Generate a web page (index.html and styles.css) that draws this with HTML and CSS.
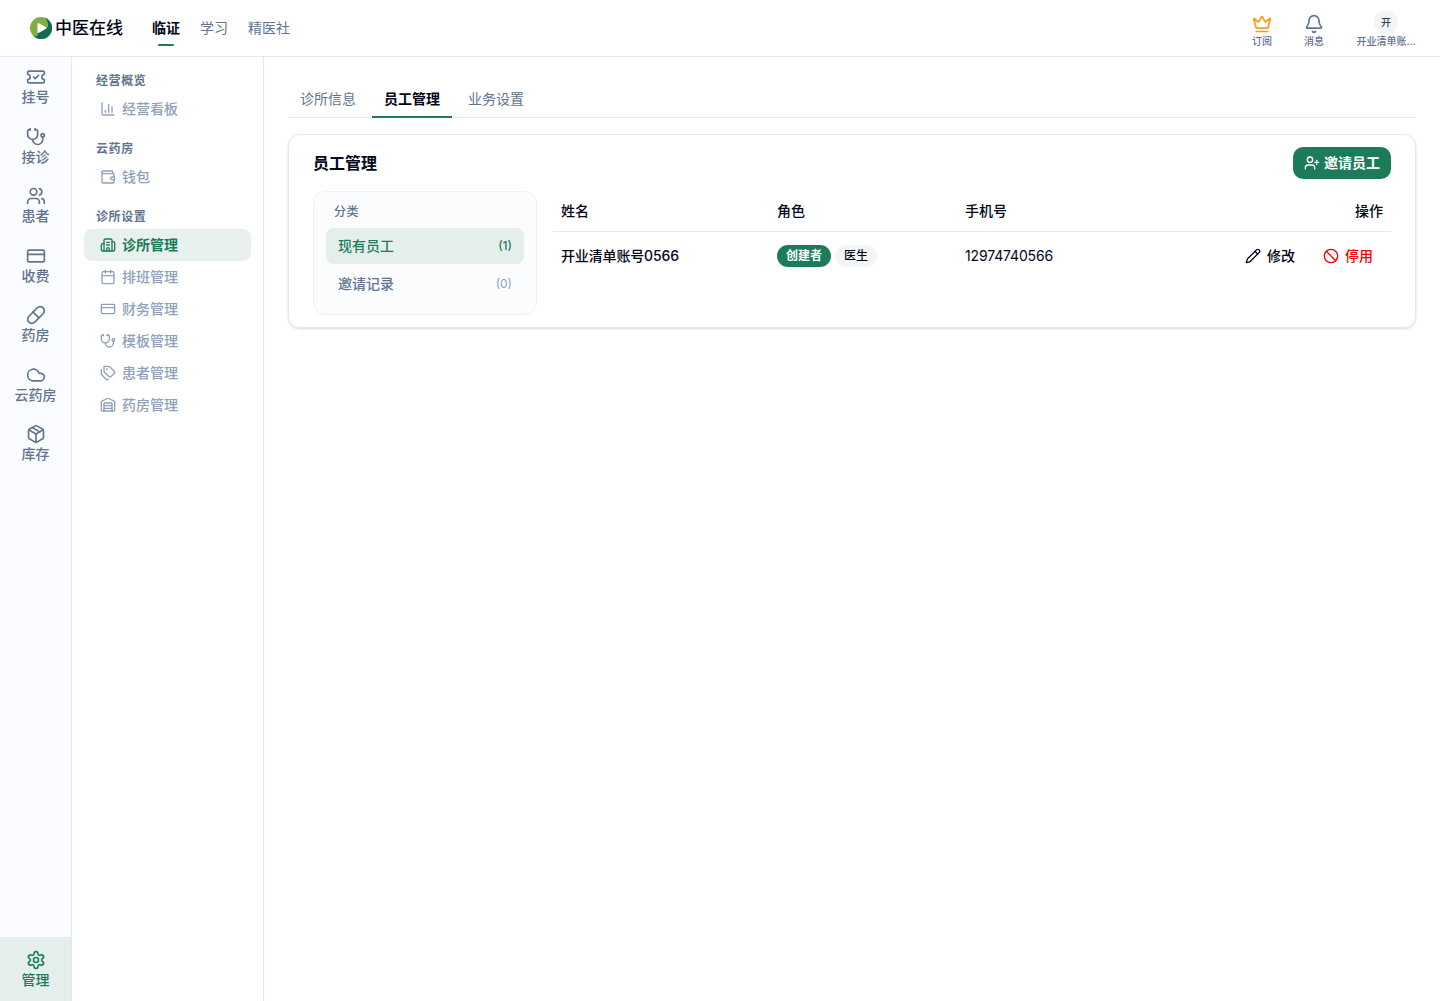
FILE: index.html
```html
<!DOCTYPE html>
<html lang="zh-CN">
<head>
    <meta charset="UTF-8">
    <meta name="viewport" content="width=device-width, initial-scale=1.0">
    <title>中医在线</title>
    <link rel="stylesheet" href="styles.css">
</head>
<body>
    <!-- shared icons -->
    <svg class="sprite">
        <symbol id="ticket" viewBox="0 0 24 24"><path d="M2 9a3 3 0 1 1 0 6v2a2 2 0 0 0 2 2h16a2 2 0 0 0 2-2v-2a3 3 0 1 1 0-6V7a2 2 0 0 0-2-2H4a2 2 0 0 0-2 2Z"/><path d="m9 12 2 2 4-4"/></symbol>
        <symbol id="stethoscope" viewBox="0 0 24 24"><path d="M11 2v2"/><path d="M5 2v2"/><path d="M5 3H4a2 2 0 0 0-2 2v4a6 6 0 0 0 12 0V5a2 2 0 0 0-2-2h-1"/><path d="M8 15a6 6 0 0 0 12 0v-3"/><circle cx="20" cy="10" r="2"/></symbol>
        <symbol id="users" viewBox="0 0 24 24"><path d="M16 21v-2a4 4 0 0 0-4-4H6a4 4 0 0 0-4 4v2"/><circle cx="9" cy="7" r="4"/><path d="M22 21v-2a4 4 0 0 0-3-3.87"/><path d="M16 3.13a4 4 0 0 1 0 7.75"/></symbol>
        <symbol id="card" viewBox="0 0 24 24"><rect width="20" height="14" x="2" y="5" rx="2"/><path d="M2 10h20"/></symbol>
        <symbol id="pill" viewBox="0 0 24 24"><path d="m10.5 20.5 10-10a4.95 4.95 0 1 0-7-7l-10 10a4.95 4.95 0 1 0 7 7Z"/><path d="m8.5 8.5 7 7"/></symbol>
        <symbol id="cloud" viewBox="0 0 24 24"><path d="M17.5 19H9a7 7 0 1 1 6.71-9h1.79a4.5 4.5 0 1 1 0 9Z"/></symbol>
        <symbol id="package" viewBox="0 0 24 24"><path d="M11 21.73a2 2 0 0 0 2 0l7-4A2 2 0 0 0 21 16V8a2 2 0 0 0-1-1.73l-7-4a2 2 0 0 0-2 0l-7 4A2 2 0 0 0 3 8v8a2 2 0 0 0 1 1.73z"/><path d="M12 22V12"/><path d="m3.3 7 8.7 5 8.7-5"/><path d="m7.5 4.27 9 5.15"/></symbol>
        <symbol id="settings" viewBox="0 0 24 24"><path d="M12.22 2h-.44a2 2 0 0 0-2 2v.18a2 2 0 0 1-1 1.73l-.43.25a2 2 0 0 1-2 0l-.15-.08a2 2 0 0 0-2.73.73l-.22.38a2 2 0 0 0 .73 2.73l.15.1a2 2 0 0 1 1 1.72v.51a2 2 0 0 1-1 1.74l-.15.09a2 2 0 0 0-.73 2.73l.22.38a2 2 0 0 0 2.73.73l.15-.08a2 2 0 0 1 2 0l.43.25a2 2 0 0 1 1 1.73V20a2 2 0 0 0 2 2h.44a2 2 0 0 0 2-2v-.18a2 2 0 0 1 1-1.73l.43-.25a2 2 0 0 1 2 0l.15.08a2 2 0 0 0 2.73-.73l.22-.39a2 2 0 0 0-.73-2.73l-.15-.08a2 2 0 0 1-1-1.74v-.5a2 2 0 0 1 1-1.74l.15-.09a2 2 0 0 0 .73-2.73l-.22-.38a2 2 0 0 0-2.73-.73l-.15.08a2 2 0 0 1-2 0l-.43-.25a2 2 0 0 1-1-1.73V4a2 2 0 0 0-2-2z"/><circle cx="12" cy="12" r="3"/></symbol>
        <symbol id="chart" viewBox="0 0 24 24"><path d="M3 3v16a2 2 0 0 0 2 2h16"/><path d="M18 17V9"/><path d="M13 17V5"/><path d="M8 17v-3"/></symbol>
        <symbol id="wallet" viewBox="0 0 24 24"><path d="M19 7V4a1 1 0 0 0-1-1H5a2 2 0 0 0 0 4h15a1 1 0 0 1 1 1v4h-3a2 2 0 0 0 0 4h3a1 1 0 0 0 1-1v-2a1 1 0 0 0-1-1"/><path d="M3 5v14a2 2 0 0 0 2 2h15a1 1 0 0 0 1-1v-4"/></symbol>
        <symbol id="hospital" viewBox="0 0 24 24"><path d="M10 12h4"/><path d="M10 8h4"/><path d="M14 21v-3a2 2 0 0 0-4 0v3"/><path d="M6 10H4a2 2 0 0 0-2 2v7a2 2 0 0 0 2 2h16a2 2 0 0 0 2-2V9a2 2 0 0 0-2-2h-2"/><path d="M6 21V5a2 2 0 0 1 2-2h8a2 2 0 0 1 2 2v16"/></symbol>
        <symbol id="calendar" viewBox="0 0 24 24"><path d="M8 2v4"/><path d="M16 2v4"/><rect width="18" height="18" x="3" y="4" rx="2"/><path d="M3 10h18"/></symbol>
        <symbol id="tags" viewBox="0 0 24 24"><path d="M13.172 2a2 2 0 0 1 1.414.586l6.71 6.71a2.4 2.4 0 0 1 0 3.408l-4.592 4.592a2.4 2.4 0 0 1-3.408 0l-6.71-6.71A2 2 0 0 1 6 9.172V3a1 1 0 0 1 1-1z"/><path d="M2 7v6.172a2 2 0 0 0 .586 1.414l6.71 6.71a2.4 2.4 0 0 0 3.191.193"/><circle cx="10.5" cy="6.5" r=".5" fill="currentColor"/></symbol>
        <symbol id="warehouse" viewBox="0 0 24 24"><path d="M18 21V10a1 1 0 0 0-1-1H7a1 1 0 0 0-1 1v11"/><path d="M22 19a2 2 0 0 1-2 2H4a2 2 0 0 1-2-2V8a2 2 0 0 1 1.132-1.803l7.95-3.974a2 2 0 0 1 1.837 0l7.948 3.974A2 2 0 0 1 22 8z"/><path d="M6 13h12"/><path d="M6 17h12"/></symbol>
        <symbol id="crown" viewBox="0 0 24 24"><path d="M11.562 3.266a.5.5 0 0 1 .876 0L15.39 8.87a1 1 0 0 0 1.516.294L21.183 5.5a.5.5 0 0 1 .798.519l-2.834 10.246a1 1 0 0 1-.956.734H5.81a1 1 0 0 1-.957-.734L2.02 6.02a.5.5 0 0 1 .798-.519l4.276 3.664a1 1 0 0 0 1.516-.294z"/><path d="M5 21h14"/></symbol>
        <symbol id="bell" viewBox="0 0 24 24"><path d="M10.268 21a2 2 0 0 0 3.464 0"/><path d="M3.262 15.326A1 1 0 0 0 4 17h16a1 1 0 0 0 .74-1.673C19.41 13.956 18 12.499 18 8A6 6 0 0 0 6 8c0 4.499-1.411 5.956-2.738 7.326"/></symbol>
        <symbol id="user-plus" viewBox="0 0 24 24"><path d="M16 21v-2a4 4 0 0 0-4-4H6a4 4 0 0 0-4 4v2"/><circle cx="9" cy="7" r="4"/><path d="M19 8v6"/><path d="M22 11h-6"/></symbol>
        <symbol id="pencil" viewBox="0 0 24 24"><path d="M21.174 6.812a1 1 0 0 0-3.986-3.987L3.842 16.174a2 2 0 0 0-.5.83l-1.321 4.352a.5.5 0 0 0 .623.622l4.353-1.32a2 2 0 0 0 .83-.497z"/><path d="m15 5 4 4"/></symbol>
        <symbol id="ban" viewBox="0 0 24 24"><circle cx="12" cy="12" r="10"/><path d="m4.9 4.9 14.2 14.2"/></symbol>
    </svg>

    <header class="header">
        <div class="logo">
            <svg class="logo-mark" viewBox="0 0 22 22">
                <circle cx="11" cy="11" r="11" fill="#7fae42"/>
                <path d="M15 .8A11 11 0 1 1 3.500 19C6 20 8.500 18.500 8 16L18 10C18.500 6 17 3 15 .8Z" fill="#0f6b57"/>
                <path d="M8.500 7v8L15.500 11Z" fill="#fff" stroke="#fff" stroke-width="2" stroke-linejoin="round"/>
            </svg>
            <span class="logo-text">中医在线</span>
        </div>
        <nav class="topnav">
            <a class="topnav-link active">临证</a>
            <a class="topnav-link">学习</a>
            <a class="topnav-link">精医社</a>
        </nav>
        <div class="tools">
            <div class="tool"><svg class="icon icon-lg crown"><use href="#crown"/></svg><span>订阅</span></div>
            <div class="tool"><svg class="icon icon-lg"><use href="#bell"/></svg><span>消息</span></div>
            <div class="tool account"><div class="avatar">开</div><span>开业清单账...</span></div>
        </div>
    </header>

    <div class="layout">
        <aside class="rail">
            <a class="rail-item"><svg class="icon icon-lg"><use href="#ticket"/></svg>挂号</a>
            <a class="rail-item"><svg class="icon icon-lg"><use href="#stethoscope"/></svg>接诊</a>
            <a class="rail-item"><svg class="icon icon-lg"><use href="#users"/></svg>患者</a>
            <a class="rail-item"><svg class="icon icon-lg"><use href="#card"/></svg>收费</a>
            <a class="rail-item"><svg class="icon icon-lg"><use href="#pill"/></svg>药房</a>
            <a class="rail-item"><svg class="icon icon-lg"><use href="#cloud"/></svg>云药房</a>
            <a class="rail-item"><svg class="icon icon-lg"><use href="#package"/></svg>库存</a>
            <a class="rail-item manage"><svg class="icon icon-lg"><use href="#settings"/></svg>管理</a>
        </aside>

        <aside class="menu">
            <h3 class="menu-title">经营概览</h3>
            <a class="menu-item"><svg class="icon"><use href="#chart"/></svg>经营看板</a>
            <h3 class="menu-title">云药房</h3>
            <a class="menu-item"><svg class="icon"><use href="#wallet"/></svg>钱包</a>
            <h3 class="menu-title">诊所设置</h3>
            <a class="menu-item active"><svg class="icon"><use href="#hospital"/></svg>诊所管理</a>
            <a class="menu-item"><svg class="icon"><use href="#calendar"/></svg>排班管理</a>
            <a class="menu-item"><svg class="icon"><use href="#card"/></svg>财务管理</a>
            <a class="menu-item"><svg class="icon"><use href="#stethoscope"/></svg>模板管理</a>
            <a class="menu-item"><svg class="icon"><use href="#tags"/></svg>患者管理</a>
            <a class="menu-item"><svg class="icon"><use href="#warehouse"/></svg>药房管理</a>
        </aside>

        <main class="main">
            <div class="tabs">
                <a class="tab">诊所信息</a>
                <a class="tab active">员工管理</a>
                <a class="tab">业务设置</a>
            </div>

            <section class="card">
                <div class="card-head">
                    <h2 class="card-title">员工管理</h2>
                    <button class="invite"><svg class="icon"><use href="#user-plus"/></svg>邀请员工</button>
                </div>
                <div class="card-body">
                    <div class="category">
                        <div class="category-title">分类</div>
                        <a class="category-item active">现有员工<span class="count">(1)</span></a>
                        <a class="category-item">邀请记录<span class="count">(0)</span></a>
                    </div>
                    <table class="staff">
                        <thead>
                            <tr>
                                <th class="col-name">姓名</th>
                                <th class="col-role">角色</th>
                                <th class="col-phone">手机号</th>
                                <th class="col-action">操作</th>
                            </tr>
                        </thead>
                        <tbody>
                            <tr>
                                <td class="name">开业清单账号0566</td>
                                <td><div class="badges"><span class="badge badge-owner">创建者</span><span class="badge">医生</span></div></td>
                                <td class="phone">12974740566</td>
                                <td>
                                    <div class="actions">
                                        <button class="action"><svg class="icon"><use href="#pencil"/></svg>修改</button>
                                        <button class="action danger"><svg class="icon"><use href="#ban"/></svg>停用</button>
                                    </div>
                                </td>
                            </tr>
                        </tbody>
                    </table>
                </div>
            </section>
        </main>
    </div>
</body>
</html>
```
FILE: styles.css
```css
* {
    box-sizing: border-box;
}
body {
    margin: 0;
    height: 100vh;
    display: flex;
    flex-direction: column;
    overflow: hidden;
    background: #fff;
    color: #020618;
    font-family: Inter, "Noto Sans CJK SC", sans-serif;
    font-size: 14px;
    line-height: 20px;
}
h2, h3 {
    margin: 0;
}
button {
    border: 0;
    background: none;
    font: inherit;
    color: inherit;
}
.sprite {
    display: none;
}
.icon {
    width: 16px;
    height: 16px;
    flex-shrink: 0;
    fill: none;
    stroke: currentColor;
    stroke-width: 2;
    stroke-linecap: round;
    stroke-linejoin: round;
}
.icon-lg {
    width: 20px;
    height: 20px;
}

/* header */
.header {
    height: 57px;
    flex-shrink: 0;
    display: flex;
    align-items: center;
    padding: 0 24px 0 30px;
    border-bottom: 1px solid #e2e8f0;
}
.logo {
    display: flex;
    align-items: center;
    gap: 3px;
    width: 94px;
}
.logo-mark {
    width: 22px;
    height: 22px;
}
.logo-text {
    font-size: 17px;
    font-weight: 500;
    white-space: nowrap;
}
.topnav {
    display: flex;
    gap: 20px;
    margin-left: 28px;
    color: #62748e;
}
.topnav-link {
    height: 36px;
    padding-top: 8px;
}
.topnav-link.active {
    color: #020618;
    font-weight: 600;
}
.topnav-link.active::after {
    content: "";
    display: block;
    width: 16px;
    height: 2px;
    margin: 6px auto 0;
    border-radius: 1px;
    background: #1c7c5a;
}
.tools {
    display: flex;
    gap: 32px;
    margin-left: auto;
    color: #62748e;
    font-size: 10px;
    line-height: 12px;
}
.tool {
    display: flex;
    flex-direction: column;
    align-items: center;
    justify-content: flex-end;
    gap: 1px;
    height: 38px;
    font-weight: 500;
}
.crown {
    color: #ff9a12;
}
.avatar {
    width: 24px;
    height: 24px;
    border-radius: 50%;
    background: #f3f4f6;
    color: #314158;
    line-height: 24px;
    text-align: center;
}
.account {
    width: 60px;
    white-space: nowrap;
}

.layout {
    display: flex;
    flex: 1;
    min-height: 0;
}

/* left rail */
.rail {
    width: 72px;
    display: flex;
    flex-direction: column;
    background: #fbfcff;
    border-right: 1px solid #e2e8f0;
    color: #62748e;
}
.rail-item {
    display: flex;
    flex-direction: column;
    align-items: center;
    gap: 1px;
    padding: 10px 0 11px;
    line-height: 17.5px;
    font-weight: 500;
}
.rail-item.manage {
    margin-top: auto;
    height: 64px;
    padding-top: 13px;
    background: #e4efec;
    color: #1c7c5a;
}

/* second level menu */
.menu {
    width: 192px;
    padding: 0 12px;
    border-right: 1px solid #e2e8f0;
    color: #90a1b9;
}
.menu-title {
    padding: 16px 12px 4px;
    font-size: 12px;
    font-weight: 600;
    line-height: 16px;
    letter-spacing: 0.6px;
    color: #62748e;
}
.menu-item {
    display: flex;
    align-items: center;
    gap: 6px;
    height: 32px;
    padding: 0 16px;
    border-radius: 8px;
    font-weight: 500;
}
.menu-item.active {
    background: #e8f1ee;
    color: #1c7c5a;
    font-weight: 600;
}

/* content */
.main {
    flex: 1;
    padding: 24px;
}
.tabs {
    display: flex;
    gap: 4px;
    height: 37px;
    border-bottom: 1px solid #e2e8f0;
    color: #62748e;
}
.tab {
    height: 37px;
    padding: 8px 12px;
}
.tab.active {
    color: #020618;
    font-weight: 600;
    border-bottom: 2px solid #1c7c5a;
}
.card {
    margin-top: 16px;
    padding: 12px 24px;
    border: 1px solid #e2e8f0;
    border-radius: 12px;
    box-shadow: 0 1px 3px rgba(0, 0, 0, 0.1), 0 1px 2px rgba(0, 0, 0, 0.06);
}
.card-head {
    display: flex;
    align-items: center;
    justify-content: space-between;
    margin-bottom: 12px;
}
.card-title {
    font-size: 16px;
    font-weight: 600;
}
.invite {
    display: flex;
    align-items: center;
    gap: 4px;
    height: 32px;
    width: 98px;
    padding: 0 11px;
    border-radius: 10px;
    background: #1c7c5a;
    color: #fff;
    font-weight: 600;
    white-space: nowrap;
}
.card-body {
    display: flex;
    align-items: flex-start;
    gap: 16px;
}
.category {
    width: 224px;
    height: 124px;
    padding: 12px;
    border: 1px solid #edf1f6;
    border-radius: 12px;
    background: #fbfcfe;
}
.category-title {
    padding: 0 8px;
    margin-bottom: 8px;
    font-size: 12px;
    font-weight: 500;
    line-height: 16px;
    letter-spacing: 0.6px;
    color: #62748e;
}
.category-item {
    display: flex;
    align-items: center;
    justify-content: space-between;
    height: 36px;
    margin-bottom: 2px;
    padding: 0 12px;
    border-radius: 8px;
    font-weight: 500;
    color: #62748e;
}
.category-item.active {
    background: #e4efec;
    color: #1c7c5a;
}
.count {
    font-size: 12px;
    font-weight: 400;
    color: #90a1b9;
}
.active .count {
    font-weight: 500;
    color: #1c7c5a;
}

.staff {
    flex: 1;
    table-layout: fixed;
    border-collapse: collapse;
}
.staff th {
    height: 40px;
    padding: 0 8px;
    text-align: left;
    font-weight: 500;
    border-bottom: 1px solid #e2e8f0;
}
.staff td {
    height: 50px;
    padding: 0 8px;
}
.staff .col-name {
    width: 216px;
}
.staff .col-role {
    width: 188px;
}
.staff .col-action {
    width: 246px;
    text-align: right;
}
.name {
    font-weight: 500;
    letter-spacing: -0.15px;
}
.phone {
    letter-spacing: -0.15px;
}
.badges {
    display: flex;
    gap: 4px;
}
.badge {
    height: 22px;
    padding: 0 9px;
    border-radius: 11px;
    background: #f3f4f6;
    font-size: 12px;
    font-weight: 500;
    line-height: 22px;
}
.badge-owner {
    background: #1c7c5a;
    color: #fff;
    font-weight: 600;
}
.actions {
    display: flex;
    justify-content: flex-end;
    gap: 8px;
}
.action {
    display: flex;
    align-items: center;
    gap: 6px;
    padding: 0 10px;
    font-weight: 500;
}
.danger {
    color: #ee0008;
}
```
